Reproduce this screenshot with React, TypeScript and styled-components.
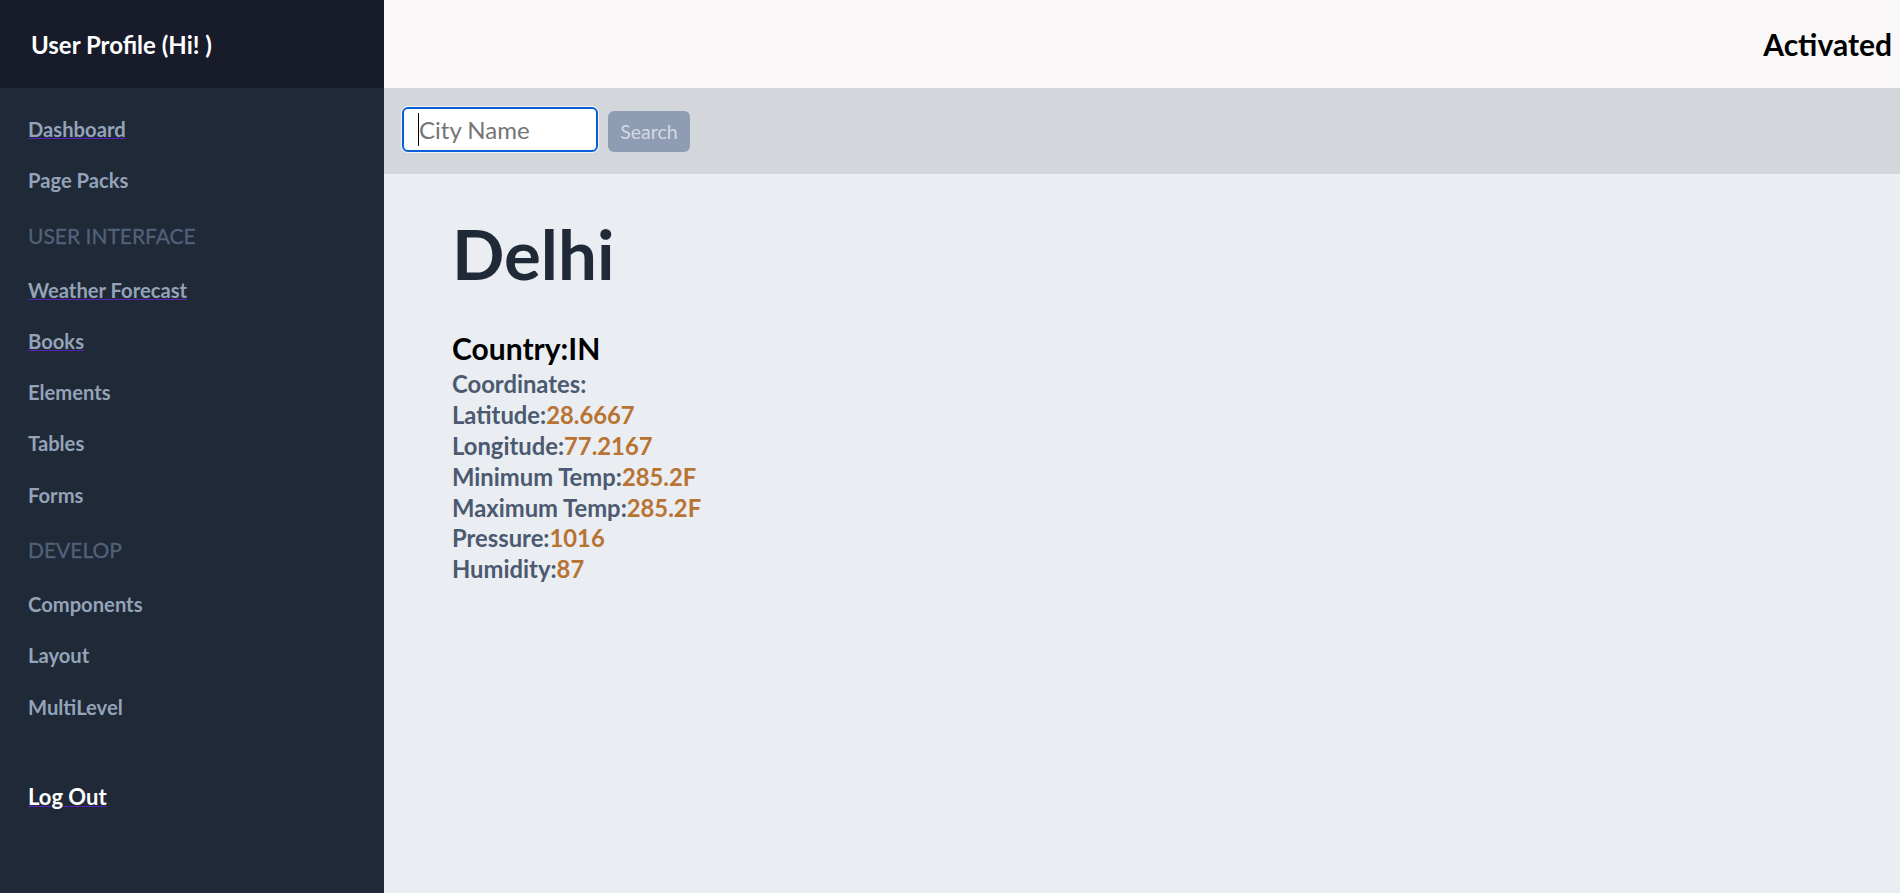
import React from 'react';
import styled, { createGlobalStyle } from 'styled-components';

const GlobalStyle = createGlobalStyle`
  html, body { margin: 0; padding: 0; height: 100%; }
  body { font-family: Lato, "Open Sans", sans-serif; background: #eaedf2; }
  #root { height: 100%; }
  * { box-sizing: border-box; }
`;

const Shell = styled.div`
  display: flex;
  width: 100vw;
  height: 100vh;
  overflow: hidden;
`;

const Sidebar = styled.aside`
  width: 384px;
  flex-shrink: 0;
  background: #1f2937;
  display: flex;
  flex-direction: column;
`;

const SidebarHeader = styled.div`
  height: 88px;
  background: #171b2a;
  display: flex;
  align-items: center;
  padding-left: 31px;
  color: #ffffff;
  font-weight: 700;
  font-size: 24px;
`;

const NavList = styled.nav`
  display: flex;
  flex-direction: column;
  align-items: flex-start;
  padding: 16px 0 0 28px;
`;

const NavLink = styled.a<{ $visited?: boolean }>`
  display: block;
  font-size: 20.2px;
  font-weight: 700;
  line-height: 51.3px;
  color: #94a3b8;
  cursor: pointer;
  text-decoration: ${(p) => (p.$visited ? 'underline' : 'none')};
  text-decoration-color: #5b21b6;
  text-decoration-thickness: 1px;
`;

const SectionLabel = styled.div`
  font-size: 21px;
  font-weight: 400;
  line-height: 58px;
  color: #526179;
  text-transform: uppercase;
  -webkit-text-stroke: 0.3px #526179;
`;

const LogOut = styled(NavLink)`
  color: #ffffff;
  font-size: 22px;
  margin-top: 38px;
`;

const Main = styled.main`
  flex: 1;
  min-width: 0;
  display: flex;
  flex-direction: column;
`;

const TopBar = styled.header`
  height: 88px;
  flex-shrink: 0;
  background: #f9f7f8;
  display: flex;
  align-items: center;
  justify-content: flex-end;
  padding-right: 8px;
  font-weight: 700;
  font-size: 30px;
  color: #000000;
`;

const SearchBar = styled.form`
  height: 86px;
  flex-shrink: 0;
  background: #d3d6db;
  display: flex;
  align-items: flex-end;
  gap: 10px;
  padding: 0 0 22px 18px;
`;

const InputWrap = styled.div`
  position: relative;
  display: flex;
`;

const CityInput = styled.input`
  width: 196px;
  height: 45px;
  border: 2px solid #0b5fd6;
  border-radius: 6px;
  box-shadow: 0 0 0 1px rgba(255, 255, 255, 0.7);
  padding: 0 0 0 15px;
  background: #ffffff;
  font-family: Lato, "Open Sans", sans-serif;
  font-size: 24px;
  color: #111;
  outline: none;
  &::placeholder {
    color: #757575;
  }
`;

const Caret = styled.span`
  position: absolute;
  left: 16px;
  top: 6px;
  width: 1px;
  height: 33px;
  background: #000;
`;

const SearchButton = styled.button`
  width: 82px;
  height: 41px;
  border: none;
  border-radius: 6px;
  background: #8e9db4;
  color: #d3d9e3;
  font-family: Lato, "Open Sans", sans-serif;
  font-size: 19.5px;
  padding: 0;
  cursor: pointer;
`;

const Content = styled.section`
  flex: 1;
  background: #eaedf2;
  padding: 41px 0 0 68px;
`;

const City = styled.h1`
  margin: 0;
  font-size: 69px;
  line-height: 78px;
  font-weight: 700;
  color: #1f2937;
`;

const Country = styled.h2`
  margin: 37.4px 0 0;
  font-size: 30px;
  line-height: 36px;
  font-weight: 700;
  color: #000000;
`;

const Details = styled.div`
  margin-top: 2.5px;
  display: flex;
  flex-direction: column;
  font-size: 23.8px;
  line-height: 30.9px;
  font-weight: 700;
  color: #4b5a70;
`;

const Row = styled.div``;

const Value = styled.span`
  color: #b87333;
`;

type NavEntry =
  | { kind: 'link'; label: string; visited?: boolean }
  | { kind: 'section'; label: string };

const nav: NavEntry[] = [
  { kind: 'link', label: 'Dashboard', visited: true },
  { kind: 'link', label: 'Page Packs' },
  { kind: 'section', label: 'User Interface' },
  { kind: 'link', label: 'Weather Forecast', visited: true },
  { kind: 'link', label: 'Books', visited: true },
  { kind: 'link', label: 'Elements' },
  { kind: 'link', label: 'Tables' },
  { kind: 'link', label: 'Forms' },
  { kind: 'section', label: 'Develop' },
  { kind: 'link', label: 'Components' },
  { kind: 'link', label: 'Layout' },
  { kind: 'link', label: 'MultiLevel' },
];

const details: { label: string; value?: string }[] = [
  { label: 'Coordinates:' },
  { label: 'Latitude:', value: '28.6667' },
  { label: 'Longitude:', value: '77.2167' },
  { label: 'Minimum Temp:', value: '285.2F' },
  { label: 'Maximum Temp:', value: '285.2F' },
  { label: 'Pressure:', value: '1016' },
  { label: 'Humidity:', value: '87' },
];

export default function App() {
  return (
    <>
      <GlobalStyle />
      <Shell>
        <Sidebar>
          <SidebarHeader>User Profile (Hi! )</SidebarHeader>
          <NavList>
            {nav.map((n, i) =>
              n.kind === 'section' ? (
                <SectionLabel key={i}>{n.label}</SectionLabel>
              ) : (
                <NavLink key={i} $visited={n.visited}>
                  {n.label}
                </NavLink>
              )
            )}
            <LogOut $visited>Log Out</LogOut>
          </NavList>
        </Sidebar>
        <Main>
          <TopBar>Activated</TopBar>
          <SearchBar onSubmit={(e) => e.preventDefault()}>
            <InputWrap>
              <CityInput placeholder="City Name" />
              <Caret />
            </InputWrap>
            <SearchButton type="submit">Search</SearchButton>
          </SearchBar>
          <Content>
            <City>Delhi</City>
            <Country>Country:IN</Country>
            <Details>
              {details.map((d) => (
                <Row key={d.label}>
                  {d.label}
                  {d.value && <Value>{d.value}</Value>}
                </Row>
              ))}
            </Details>
          </Content>
        </Main>
      </Shell>
    </>
  );
}
